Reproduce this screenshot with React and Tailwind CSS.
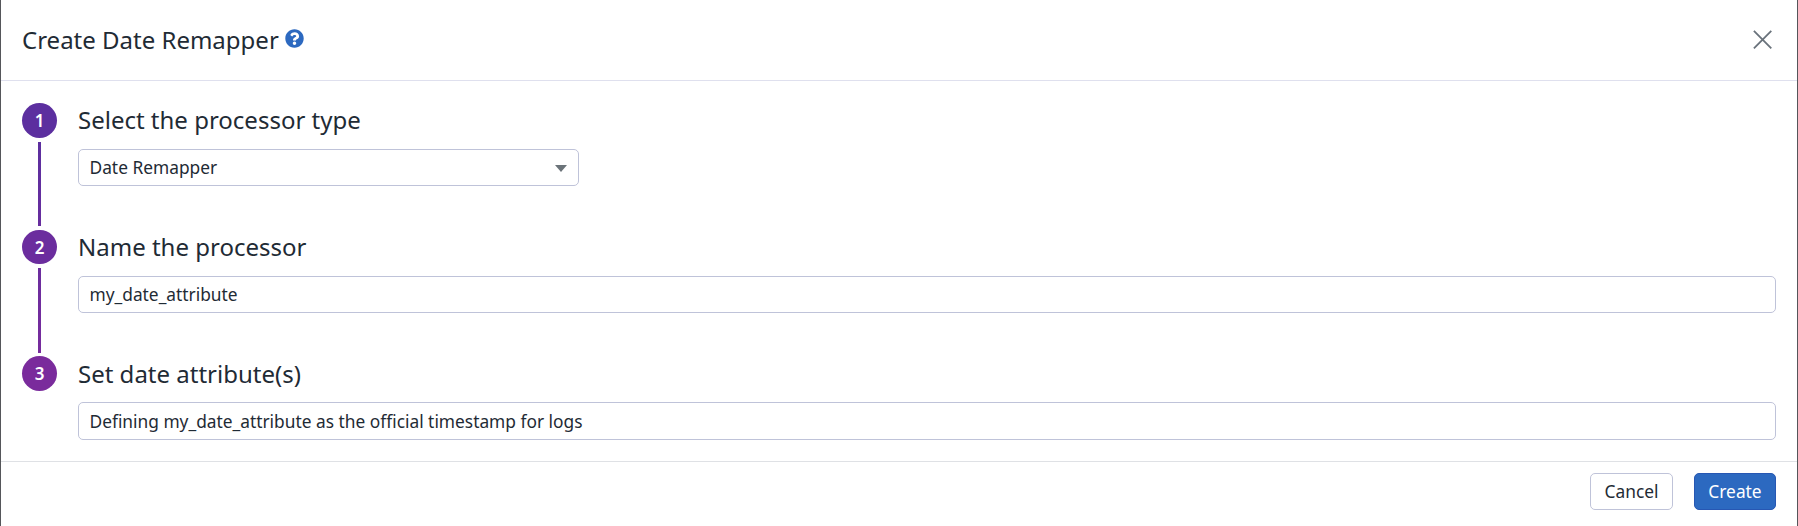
import { FaQuestionCircle } from "react-icons/fa";

function Step({ number, title, badge, line, height, heading = "leading-[33px]", children }) {
  return (
    <section className={`flex ${height}`}>
      <div className="flex w-[35px] shrink-0 flex-col items-center">
        <div className={`flex w-[35px] shrink-0 items-center justify-center rounded-full text-[17px] leading-none font-semibold text-white ${badge}`}>
          {number}
        </div>
        {line && <div className={`mt-1 w-[3px] flex-1 ${line}`} />}
      </div>
      <div className="ml-[21px] flex-1">
        <h2 className={`h-[46px] text-[24px] whitespace-nowrap ${heading}`}>{title}</h2>
        {children}
      </div>
    </section>
  );
}

const field = "flex w-full items-center rounded-[5px] border border-[#bfc3d9] bg-white pr-[11px] pl-[10.5px] text-[17.33px] leading-none outline-none";

export default function App() {
  return (
    <main className="flex h-[526px] w-full flex-col overflow-hidden border-x border-[#55565a] bg-white font-['Noto_Sans',sans-serif] text-[#1f2b35]">
      <header className="flex h-[81px] shrink-0 items-center justify-between border-b border-[#dfe0ee] pr-[25px] pl-[21px]">
        <div className="flex items-center gap-[6.5px]">
          <h1 className="text-[24px] leading-none whitespace-nowrap">Create Date Remapper</h1>
          <FaQuestionCircle className="mb-[3px] size-[19px] text-[#2c69c0]" />
        </div>
        <button aria-label="Close" className="mb-px">
          <svg className="size-[19px]" viewBox="0 0 19 19" fill="none" stroke="#69727b" strokeWidth="1.8">
            <path d="M.9.9l17.4 17.4M18.3.9L.9 18.3" />
          </svg>
        </button>
      </header>
      <div className="flex h-[380px] shrink-0 flex-col px-[21px] pt-[22px]">
        <Step number="1" title="Select the processor type" badge="h-[35px] bg-[#5c2f9f]" line="mb-1 bg-linear-to-b from-[#5c2f9f] to-[#672d9e]" height="h-[127px]">
          <button className={`${field} h-[37px] max-w-[501px] justify-between`}>
            <span>Date Remapper</span>
            <svg className="mt-px h-[7px] w-[12px]" viewBox="0 0 12 7" fill="#6b7379">
              <path d="M0 0h12L6 7z" />
            </svg>
          </button>
        </Step>
        <Step number="2" title="Name the processor" badge="h-[34px] bg-[#6b2d9e]" line="mb-[3px] bg-linear-to-b from-[#6b2d9e] to-[#772b9d]" height="h-[126px]">
          <input className={`${field} h-[37px] pb-[2px]`} defaultValue="my_date_attribute" />
        </Step>
        <Step number="3" title="Set date attribute(s)" badge="h-[35px] bg-[#7a2b9c]" height="h-[84px]" heading="leading-[35px]">
          <input className={`${field} h-[38px] pb-px`} defaultValue="Defining my_date_attribute as the official timestamp for logs" />
        </Step>
      </div>
      <footer className="flex flex-1 items-start justify-end gap-[21px] border-t border-[#dfe1e5] pt-[11px] pr-[21px] text-[17.33px] leading-none">
        <button className="h-[37px] w-[83px] rounded-[5px] border border-[#bfc3d9]">Cancel</button>
        <button className="h-[37px] w-[82px] rounded-[5px] border border-[#2757b3] bg-[#2c69c0] text-white">Create</button>
      </footer>
    </main>
  );
}
